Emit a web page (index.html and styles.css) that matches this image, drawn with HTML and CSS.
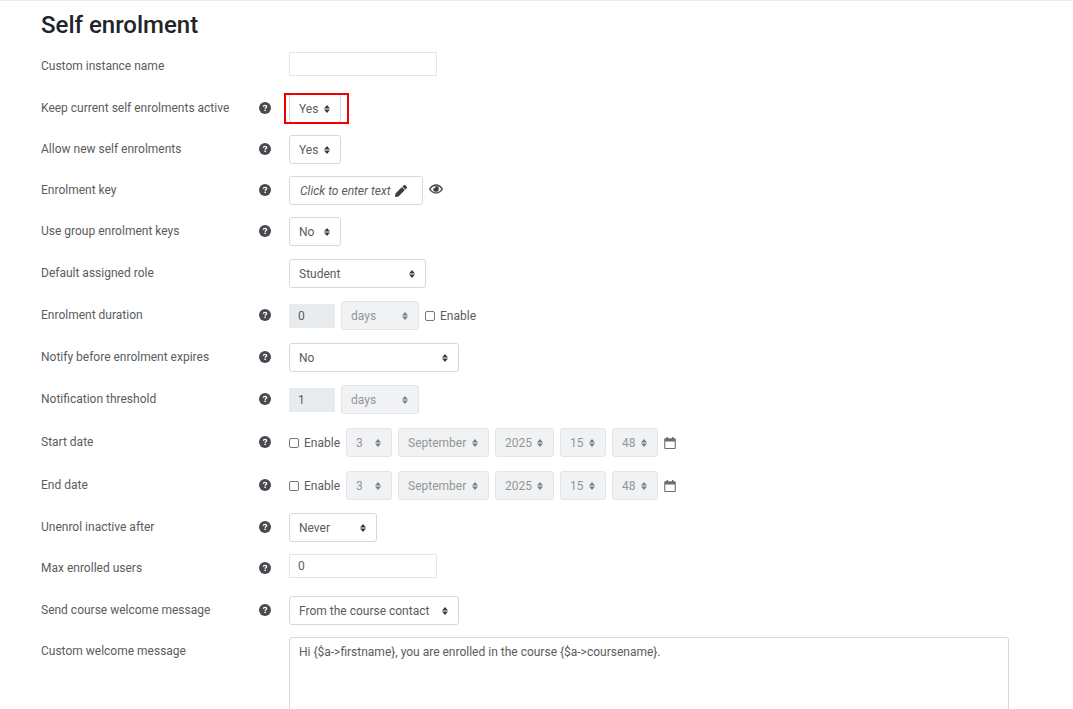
FILE: index.html
```
<!DOCTYPE html>
<html lang="en">
<head>
<meta charset="utf-8">
<title>Self enrolment</title>
<link rel="stylesheet" href="styles.css">
</head>
<body>
<svg class="sprite" aria-hidden="true">
  <symbol id="i-help" viewBox="0 0 12 12"><circle cx="6" cy="6" r="6" fill="#4b494f"/><path d="M4.300 4.700C4.400 3.800 5.100 3.300 6 3.300c1 0 1.700.5 1.700 1.300 0 1.100-1.500 1-1.500 2.100" fill="none" stroke="#fff" stroke-width="1.300"/><rect x="5.400" y="7.600" width="1.500" height="1.400" fill="#fff"/></symbol>
  <symbol id="i-pencil" viewBox="0 0 512 512"><path fill="#3b3e42" d="M498 142l-46 46c-5 5-13 5-17 0L324 77c-5-5-5-12 0-17l46-46c19-19 49-19 68 0l60 60c19 19 19 49 0 68zm-214-42L22 362 0 484c-3 16 12 30 28 28l122-22 262-262c5-5 5-13 0-17L301 100c-4-5-12-5-17 0z"/></symbol>
  <symbol id="i-eye" viewBox="0 0 576 512"><path fill="#3b3e42" stroke="#3b3e42" stroke-width="14" d="M288 144a111 111 0 0 0-31 5 55 55 0 0 1 7 27 56 56 0 0 1-56 56 55 55 0 0 1-27-7A112 112 0 1 0 288 144zm285 97C518 135 411 64 288 64S58 135 3 241a32 32 0 0 0 0 29c55 107 162 178 285 178s230-71 285-177a32 32 0 0 0 0-30zM288 400c-98 0-189-55-238-144C99 167 190 112 288 112s189 55 238 144C477 345 386 400 288 400z"/></symbol>
  <symbol id="i-calendar" viewBox="0 0 12 12"><path fill="#6a6e73" d="M1.500 1.200H2.500V0H4v1.200h4V0h1.500v1.200h1c.8 0 1.300.5 1.300 1.200v8.300c0 .8-.5 1.300-1.300 1.300h-9C.7 12 .2 11.500 .2 10.700V2.400c0-.7.5-1.200 1.300-1.200zM1.300 4.400v6.500h9.400V4.400z"/></symbol>
</svg>
<main class="page">
<h1 class="title">Self enrolment</h1>
<form class="form">
  <div class="row row--roomy">
    <div class="label"><label for="name">Custom instance name</label></div>
    <div class="field field--text"><input class="text" id="name" type="text"></div>
  </div>
  <div class="row">
    <div class="label"><label for="keep">Keep current self enrolments active</label><button type="button" class="help" aria-label="Help"><svg><use href="#i-help"/></svg></button></div>
    <div class="field"><span class="marked"><select class="select w-short" id="keep"><option>Yes</option><option>No</option></select></span></div>
  </div>
  <div class="row">
    <div class="label"><label for="allow">Allow new self enrolments</label><button type="button" class="help" aria-label="Help"><svg><use href="#i-help"/></svg></button></div>
    <div class="field"><select class="select w-short" id="allow"><option>Yes</option><option>No</option></select></div>
  </div>
  <div class="row">
    <div class="label"><span>Enrolment key</span><button type="button" class="help" aria-label="Help"><svg><use href="#i-help"/></svg></button></div>
    <div class="field"><button type="button" class="key"><em>Click to enter text</em><svg><use href="#i-pencil"/></svg></button><button type="button" class="reveal" aria-label="Reveal"><svg><use href="#i-eye"/></svg></button></div>
  </div>
  <div class="row row--roomy">
    <div class="label"><label for="group">Use group enrolment keys</label><button type="button" class="help" aria-label="Help"><svg><use href="#i-help"/></svg></button></div>
    <div class="field"><select class="select w-short" id="group"><option>No</option><option>Yes</option></select></div>
  </div>
  <div class="row row--roomy">
    <div class="label"><label for="role">Default assigned role</label></div>
    <div class="field"><select class="select w-role" id="role"><option>Student</option></select></div>
  </div>
  <div class="row row--roomy">
    <div class="label"><label for="duration">Enrolment duration</label><button type="button" class="help" aria-label="Help"><svg><use href="#i-help"/></svg></button></div>
    <div class="field"><input class="text text--number" id="duration" type="text" value="0" disabled><select class="select w-unit" aria-label="Duration unit" disabled><option>days</option></select><label class="check"><input type="checkbox">Enable</label></div>
  </div>
  <div class="row row--roomy">
    <div class="label"><label for="notify">Notify before enrolment expires</label><button type="button" class="help" aria-label="Help"><svg><use href="#i-help"/></svg></button></div>
    <div class="field"><select class="select w-wide" id="notify"><option>No</option></select></div>
  </div>
  <div class="row row--date">
    <div class="label"><label for="threshold">Notification threshold</label><button type="button" class="help" aria-label="Help"><svg><use href="#i-help"/></svg></button></div>
    <div class="field"><input class="text text--number" id="threshold" type="text" value="1" disabled><select class="select w-unit" aria-label="Threshold unit" disabled><option>days</option></select></div>
  </div>
  <div class="row row--date">
    <div class="label"><span>Start date</span><button type="button" class="help" aria-label="Help"><svg><use href="#i-help"/></svg></button></div>
    <div class="field"><label class="check"><input type="checkbox">Enable</label><select class="select w-num" aria-label="Start day" disabled><option>3</option></select><select class="select w-month" aria-label="Start month" disabled><option>September</option></select><select class="select w-year" aria-label="Start year" disabled><option>2025</option></select><select class="select w-num" aria-label="Start hour" disabled><option>15</option></select><select class="select w-num" aria-label="Start minute" disabled><option>48</option></select><button type="button" class="calendar" aria-label="Calendar"><svg><use href="#i-calendar"/></svg></button></div>
  </div>
  <div class="row row--roomy">
    <div class="label"><span>End date</span><button type="button" class="help" aria-label="Help"><svg><use href="#i-help"/></svg></button></div>
    <div class="field"><label class="check"><input type="checkbox">Enable</label><select class="select w-num" aria-label="End day" disabled><option>3</option></select><select class="select w-month" aria-label="End month" disabled><option>September</option></select><select class="select w-year" aria-label="End year" disabled><option>2025</option></select><select class="select w-num" aria-label="End hour" disabled><option>15</option></select><select class="select w-num" aria-label="End minute" disabled><option>48</option></select><button type="button" class="calendar" aria-label="Calendar"><svg><use href="#i-calendar"/></svg></button></div>
  </div>
  <div class="row">
    <div class="label"><label for="inactive">Unenrol inactive after</label><button type="button" class="help" aria-label="Help"><svg><use href="#i-help"/></svg></button></div>
    <div class="field"><select class="select w-never" id="inactive"><option>Never</option></select></div>
  </div>
  <div class="row row--roomy">
    <div class="label"><label for="max">Max enrolled users</label><button type="button" class="help" aria-label="Help"><svg><use href="#i-help"/></svg></button></div>
    <div class="field field--text"><input class="text" id="max" type="text" value="0"></div>
  </div>
  <div class="row">
    <div class="label"><label for="send">Send course welcome message</label><button type="button" class="help" aria-label="Help"><svg><use href="#i-help"/></svg></button></div>
    <div class="field"><select class="select w-wide" id="send"><option>From the course contact</option></select></div>
  </div>
  <div class="row">
    <div class="label"><label for="message">Custom welcome message</label></div>
    <div class="field field--text"><textarea class="message" id="message" rows="8">Hi {$a-&gt;firstname}, you are enrolled in the course {$a-&gt;coursename}.</textarea></div>
  </div>
</form>
</main>
</body>
</html>
```
FILE: styles.css
```
* { box-sizing: border-box; }
body { margin: 0; background: #fff; color: #5a5c60; font: 12px/18px Roboto, sans-serif; }
button, input, select, textarea { font: inherit; color: inherit; margin: 0; }
button { border: 0; background: none; padding: 0; display: flex; align-items: center; }
.sprite { display: none; }
.page { height: 100vh; overflow: hidden; border-top: 1px solid #ececec; padding: 8px 64px 0 41px; }
.title { margin: 0 0 11px; font-size: 24px; line-height: 32px; font-weight: 500; color: #212529; }
.form { display: flex; flex-direction: column; gap: 12px; }
.row { display: grid; grid-template-columns: 230px 1fr; column-gap: 18px; height: 29px; }
.row--roomy { height: 30px; }
.row--date { height: 31px; }
.label { display: flex; justify-content: space-between; align-items: center; height: 28px; white-space: nowrap; }
.help svg { width: 12px; height: 12px; display: block; }
.field { display: flex; align-items: center; align-self: start; gap: 6px; height: 29px; }
.field--text { align-items: flex-start; }
.text { width: 148px; height: 24px; border: 1px solid #e3e5e8; border-radius: 1px; padding: 0 8px; background: #fff; }
.text--number { width: 46px; border-color: #e9ecef; background: #e9ecef; }
.select {
  appearance: none; height: 29px; padding: 0 20px 0 9px; border: 1px solid #d3d9df; border-radius: 3px;
  background: #fff url("data:image/svg+xml,%3Csvg xmlns='http://www.w3.org/2000/svg' viewBox='0 0 6 8'%3E%3Cpath fill='%23343a40' d='M3 0L0 3.400h6zm0 8L0 4.600h6z'/%3E%3C/svg%3E") no-repeat right 10px center / 6px 8px;
}
.select:disabled { opacity: 0.65; background-color: #e9ecef; color: #5a5c60; }
.w-short { width: 52px; }
.w-role { width: 137px; }
.w-unit { width: 78px; }
.w-wide { width: 170px; }
.w-num { width: 46px; }
.w-month { width: 91px; }
.w-year { width: 59px; }
.w-never { width: 88px; }
.marked { position: relative; display: flex; }
.marked::after { content: ""; position: absolute; inset: -1px -8px -1px -5px; border: 2px solid #f00000; pointer-events: none; }
.key { height: 29px; gap: 4px; border: 1px solid #d3d9df; border-radius: 3px; padding: 0 15px 0 10px; }
.key svg { width: 12px; height: 12px; }
.reveal { align-self: flex-start; height: 26px; }
.reveal svg { width: 14px; height: 12px; }
.check { display: flex; align-items: center; gap: 5px; }
.check input { appearance: none; width: 10px; height: 10px; border: 1px solid #767676; border-radius: 2px; background: #fff; }
.calendar svg { width: 12px; height: 12px; }
.message { width: 100%; border: 1px solid #d3d9df; border-radius: 3px; padding: 5px 9px; resize: none; background: #fff; }
.field:has(.message) { height: auto; }
```
